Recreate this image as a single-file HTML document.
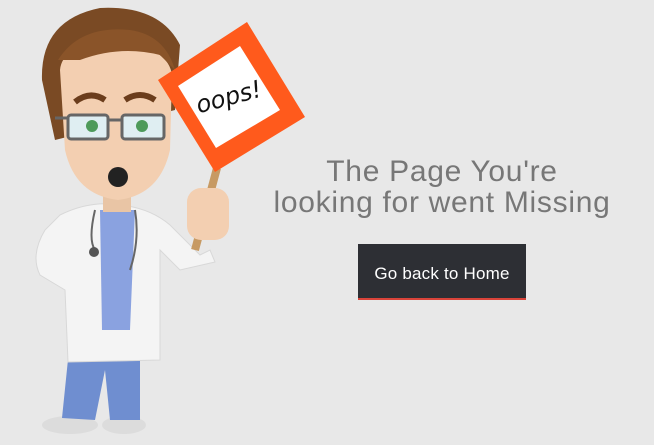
<!DOCTYPE html>
<html><head><meta charset="utf-8"><style>
html,body{margin:0;padding:0;background:#e8e8e8;width:654px;height:445px;overflow:hidden;font-family:"Liberation Sans",sans-serif}
.t{position:absolute;left:230px;width:424px;text-align:center;color:#777;font-size:30px;font-weight:300;line-height:31px;top:156px;letter-spacing:0.7px}
.b{position:absolute;left:358px;top:244px;width:168px;height:54px;background:#2d2f34;border-bottom:2px solid #d9443a;color:#fff;font-size:17px;line-height:60px;text-align:center;letter-spacing:0.2px}
svg{position:absolute;left:0;top:0}
</style></head><body>
<svg width="320" height="445" viewBox="0 0 320 445">
<ellipse cx="70" cy="425" rx="28" ry="9" fill="#dcdcdc"/>
<ellipse cx="124" cy="425" rx="22" ry="9" fill="#dcdcdc"/>
<path d="M70 340 L140 340 L140 420 L110 420 L105 370 L95 420 L62 418 Z" fill="#6f8ed0"/>
<path d="M60 215 Q90 200 120 205 Q150 208 170 225 L200 255 L210 250 L215 262 L180 270 L160 250 L160 360 L68 362 L65 290 L40 275 Q30 255 45 230 Z" fill="#f4f4f4" stroke="#d8d8d8"/>
<path d="M100 210 L135 210 L130 330 L102 330 Z" fill="#8aa2e0"/>
<path d="M95 210 Q88 240 95 250 M135 210 Q140 240 130 270" stroke="#666" stroke-width="2" fill="none"/>
<circle cx="94" cy="252" r="5" fill="#555"/>
<rect x="103" y="190" width="28" height="22" fill="#e9c5a5"/>
<path d="M42 80 Q40 20 100 8 Q160 5 180 45 L175 110 L55 140 Z" fill="#7a4a24"/>
<path d="M60 70 Q62 45 110 42 Q168 45 172 75 L170 150 Q160 195 118 200 Q75 195 65 150 Z" fill="#f3cfb1"/>
<path d="M58 60 Q80 25 130 30 Q165 35 175 70 L160 55 Q120 45 80 60 Z" fill="#8a5429"/>
<path d="M75 102 Q90 90 105 100" stroke="#6b3d1c" stroke-width="6" fill="none"/>
<path d="M125 100 Q140 90 155 100" stroke="#6b3d1c" stroke-width="6" fill="none"/>
<rect x="68" y="115" width="40" height="24" rx="3" fill="#dfeef2" stroke="#666" stroke-width="3"/>
<rect x="122" y="115" width="42" height="24" rx="3" fill="#dfeef2" stroke="#666" stroke-width="3"/>
<line x1="108" y1="120" x2="122" y2="120" stroke="#666" stroke-width="3"/>
<line x1="55" y1="118" x2="68" y2="118" stroke="#666" stroke-width="3"/>
<circle cx="92" cy="126" r="6" fill="#4e9a5a"/><circle cx="142" cy="126" r="6" fill="#4e9a5a"/>
<ellipse cx="118" cy="177" rx="10" ry="10" fill="#222"/>
<line x1="217" y1="168" x2="195" y2="250" stroke="#c79a63" stroke-width="8"/>
<rect x="187" y="188" width="42" height="52" rx="14" fill="#f3cfb1"/>
<polygon points="158,80 247,22 305,117 215,172" fill="#ff5a1c"/>
<polygon points="178,86 240,46 280,110 216,148" fill="#fff"/>
<text x="229" y="105" font-family="'DejaVu Sans',sans-serif" font-style="italic" font-size="24" fill="#111" text-anchor="middle" transform="rotate(-15 229 98)">oops!</text>
</svg>
<div class="t">The Page You're<br>looking for went Missing</div>
<div class="b">Go back to Home</div>
</body></html>
